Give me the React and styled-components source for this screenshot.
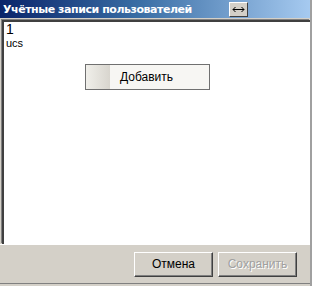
import React from 'react';
import styled, { createGlobalStyle } from 'styled-components';

const Global = createGlobalStyle`
  html, body { margin: 0; padding: 0; background: #d4d0c8; }
  body { font-family: "Liberation Sans", Arial, sans-serif; }
`;

const Window = styled.div`
  width: 312px;
  height: 286px;
  display: flex;
  flex-direction: column;
  background: #d4d0c8;
  box-sizing: border-box;
  border-right: 2px solid #a0a0a0;
  overflow: hidden;
`;

const TitleBar = styled.div`
  height: 18px;
  display: flex;
  align-items: center;
  padding-left: 3px;
  background: linear-gradient(to right, #0a246a 0%, #3a6ea5 45%, #a6caf0 100%);
  color: #fff;
  font-family: "DejaVu Sans", sans-serif;
  font-weight: bold;
  font-size: 11px;
  letter-spacing: -0.45px;
  border-bottom: 2px solid #d4d0c8;
`;

const Title = styled.span`
  flex: 1;
`;

const ToggleButton = styled.button`
  width: 19px;
  height: 15px;
  margin-right: 62px;
  padding: 0;
  display: flex;
  align-items: center;
  justify-content: center;
  border: 1px solid;
  border-color: #fff #404040 #404040 #fff;
  background: #d4d0c8;
`;

const Body = styled.div`
  flex: 1;
  margin-left: 2px;
  background: #fff;
  border-style: solid;
  border-width: 2px 0 0 2px;
  border-color: #404040;
  box-shadow: -1px -1px 0 #808080;
  display: flex;
  flex-direction: column;
  padding: 0 2px;
  color: #000;
`;

const Count = styled.div`
  font-size: 14px;
  line-height: 15px;
`;

const Login = styled.div`
  font-size: 11px;
  line-height: 12px;
`;

const AddButton = styled.button`
  align-self: flex-start;
  margin: 15px 0 0 79px;
  width: 125px;
  height: 26px;
  padding: 0;
  display: flex;
  align-items: stretch;
  border: 1px solid #707070;
  background: #f7f6f3;
  font-family: "Liberation Sans", Arial, sans-serif;
  font-size: 12px;
  color: #000;
`;

const AddIcon = styled.span`
  width: 24px;
  background: linear-gradient(to right, #f0efea, #d8d5ce);
`;

const AddLabel = styled.span`
  flex: 1;
  display: flex;
  align-items: center;
  padding-left: 10px;
`;

const Footer = styled.div`
  height: 38px;
  display: flex;
  justify-content: flex-end;
  align-items: center;
  gap: 5px;
  padding-right: 13px;
  border-top: 1px solid #fff;
  border-bottom: 1px solid #808080;
  margin-bottom: 2px;
`;

const Button = styled.button`
  width: 79px;
  height: 25px;
  padding: 0;
  background: #d4d0c8;
  border: 1px solid;
  border-color: #fff #404040 #404040 #fff;
  box-shadow: inset -1px -1px 0 #808080;
  font-family: "Liberation Sans", Arial, sans-serif;
  font-size: 12px;
  color: ${p => (p.disabled ? '#a0a0a0' : '#000')};
  text-shadow: ${p => (p.disabled ? '1px 1px 0 #fff' : 'none')};
`;

const ArrowIcon = () => (
  <svg width="13" height="7" viewBox="0 0 13 7" fill="none" stroke="#000" strokeWidth="1">
    <path d="M1 3.5H12M3.5 1L1 3.5L3.5 6M9.5 1L12 3.5L9.5 6" />
  </svg>
);

export default function App() {
  return (
    <Window>
      <Global />
      <TitleBar>
        <Title>Учётные записи пользователей</Title>
        <ToggleButton>
          <ArrowIcon />
        </ToggleButton>
      </TitleBar>
      <Body>
        <Count>1</Count>
        <Login>ucs</Login>
        <AddButton>
          <AddIcon />
          <AddLabel>Добавить</AddLabel>
        </AddButton>
      </Body>
      <Footer>
        <Button>Отмена</Button>
        <Button disabled>Сохранить</Button>
      </Footer>
    </Window>
  );
}
